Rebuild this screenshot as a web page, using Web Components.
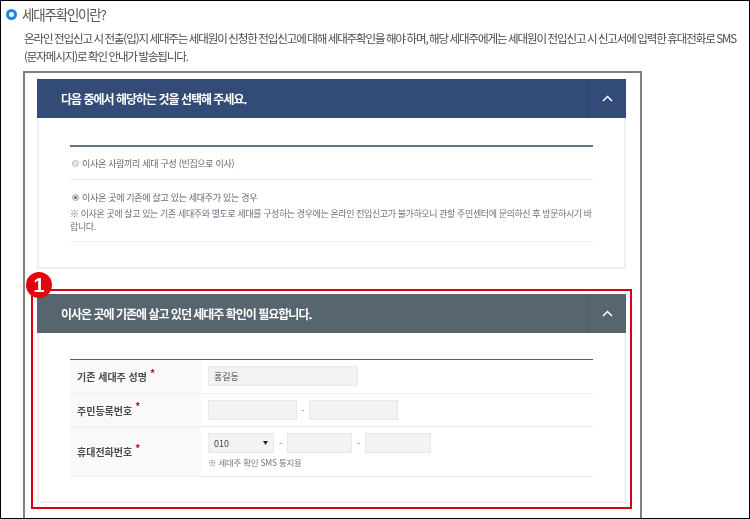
<!DOCTYPE html>
<html lang="ko">
<head>
<meta charset="utf-8">
<title>세대주확인</title>
<style>
  html, body { margin: 0; padding: 0; background: #fff; }
  body { width: 750px; height: 519px; overflow: hidden; font-family: "Noto Sans CJK KR", "Noto Sans", sans-serif; }
</style>
</head>
<body>
<guide-page>
  <guide-title>세대주확인이란?</guide-title>
  <guide-text>온라인 전입신고 시 전출(입)지 세대주는 세대원이 신청한 전입신고에 대해 세대주확인을 해야 하며, 해당 세대주에게는 세대원이 전입신고 시 신고서에 입력한 휴대전화로 SMS<br>(문자메시지)로 확인 안내가 발송됩니다.</guide-text>
  <shot-frame>
    <fold-panel heading="다음 중에서 해당하는 것을 선택해 주세요." tone="#334b77">
      <choice-list></choice-list>
    </fold-panel>
    <mark-box number="1">
      <fold-panel heading="이사온 곳에 기존에 살고 있던 세대주 확인이 필요합니다." tone="#57656e">
        <owner-form></owner-form>
      </fold-panel>
    </mark-box>
  </shot-frame>
</guide-page>

<script>
class GuidePage extends HTMLElement {
  constructor () {
    super()
    this.attachShadow({ mode: 'open' }).innerHTML = /* html */`
      <style>
        :host {
          display: block;
          box-sizing: border-box;
          width: 750px;
          height: 519px;
          overflow: hidden;
          border: 1px solid #000;
          background: #fff;
          color: #444;
          font-family: "Noto Sans CJK KR", "Noto Sans", sans-serif;
          filter: blur(.3px);
        }
      </style>
      <slot></slot>`
  }
}

class GuideTitle extends HTMLElement {
  constructor () {
    super()
    this.attachShadow({ mode: 'open' }).innerHTML = /* html */`
      <style>
        :host {
          display: flex;
          align-items: center;
          gap: 5px;
          height: 26px;
          padding-left: 5px;
          font-size: 13.5px;
          letter-spacing: -1.2px;
          color: #555;
        }
        i {
          box-sizing: border-box;
          width: 11px;
          height: 11px;
          border: 3px solid #1c86e8;
          border-radius: 50%;
          background: #fff;
        }
      </style>
      <i></i><slot></slot>`
  }
}

class GuideText extends HTMLElement {
  constructor () {
    super()
    this.attachShadow({ mode: 'open' }).innerHTML = /* html */`
      <style>
        :host {
          display: block;
          padding: 2px 0 0 23px;
          font-size: 11.5px;
          line-height: 18px;
          letter-spacing: -1.1px;
          word-spacing: -0.6px;
          white-space: nowrap;
          color: #4a4a4a;
        }
      </style>
      <slot></slot>`
  }
}

class ShotFrame extends HTMLElement {
  constructor () {
    super()
    this.attachShadow({ mode: 'open' }).innerHTML = /* html */`
      <style>
        :host {
          display: block;
          box-sizing: border-box;
          width: 619px;
          height: 450px;
          margin: 6px 0 0 22px;
          padding: 6px 0 0 12px;
          border: solid #808080;
          border-width: 2px 2px 0 2px;
          background: #fff;
        }
      </style>
      <slot></slot>`
  }
}

class FoldPanel extends HTMLElement {
  constructor () {
    super()
    const heading = this.getAttribute('heading')
    const tone = this.getAttribute('tone')
    this.attachShadow({ mode: 'open' }).innerHTML = /* html */`
      <style>
        :host {
          display: block;
          box-sizing: border-box;
          width: 589px;
          background: #fff;
          border: solid #f0f0f0;
          border-width: 0 2px 2px;
        }
        header {
          display: flex;
          align-items: center;
          height: 39px;
          margin: 0 -2px;
          padding-left: 24px;
          background: ${tone};
          color: #fff;
          font-size: 12px;
          font-weight: 700;
          letter-spacing: -1px;
        }
        span { flex: 1; }
        button {
          display: flex;
          align-items: center;
          justify-content: center;
          width: 39px;
          height: 39px;
          padding: 0;
          border: 0;
          border-left: 1px solid rgba(0, 0, 0, .1);
          background: none;
        }
        section { padding: 0 31px; }
      </style>
      <header>
        <span>${heading}</span>
        <button aria-label="접기">
          <svg width="11" height="7" viewBox="0 0 11 7" fill="none" stroke="#fff" stroke-width="1.5"><path d="M1 6 5.5 1.5 10 6"/></svg>
        </button>
      </header>
      <section><slot></slot></section>`
  }
}

class ChoiceList extends HTMLElement {
  constructor () {
    super()
    this.attachShadow({ mode: 'open' }).innerHTML = /* html */`
      <style>
        :host {
          display: block;
          box-sizing: border-box;
          height: 149px;
          padding-top: 27px;
          font-size: 9px;
          color: #666;
          letter-spacing: -0.3px;
        }
        .rule { height: 2px; background: #67778a; }
        .row { border-bottom: 1px solid #eee; white-space: nowrap; }
        .one { display: flex; align-items: center; height: 32px; }
        .two { padding-top: 10px; height: 51px; }
        .line { display: flex; align-items: center; height: 15px; }
        .note { line-height: 13px; color: #6a7080; margin-top: 2px; letter-spacing: -0.4px; }
        b {
          box-sizing: border-box;
          flex: none;
          width: 7px;
          height: 7px;
          margin: 0 3px 0 2px;
          border: 1px solid #bbb;
          border-radius: 50%;
          background: #e4e4e4;
        }
        b.on { background: #666; box-shadow: inset 0 0 0 1px #fff; }
      </style>
      <div class="rule"></div>
      <div class="row one"><b></b>이사온 사람끼리 세대 구성 (빈집으로 이사)</div>
      <div class="row two">
        <div class="line"><b class="on"></b>이사온 곳에 기존에 살고 있는 세대주가 있는 경우</div>
        <div class="note">※ 이사온 곳에 살고 있는 기존 세대주와 별도로 세대를 구성하는 경우에는 온라인 전입신고가 불가하오니 관할 주민센터에 문의하신 후 방문하시기 바<br>랍니다.</div>
      </div>`
  }
}

class MarkBox extends HTMLElement {
  constructor () {
    super()
    const number = this.getAttribute('number')
    this.attachShadow({ mode: 'open' }).innerHTML = /* html */`
      <style>
        :host {
          display: block;
          position: relative;
          box-sizing: border-box;
          width: 601px;
          height: 220px;
          margin: 20px 0 0 -6px;
          padding: 3px 4px 3px 4px;
          border: 2px solid #d8000f;
        }
        span {
          position: absolute;
          left: -7px;
          top: -19px;
          width: 26px;
          height: 26px;
          border-radius: 50%;
          background: #e3000f;
          color: #fff;
          font: 700 20px/26px "Liberation Sans", sans-serif;
          text-align: center;
        }
      </style>
      <slot></slot>
      <span>${number}</span>`
  }
}

class FormRow extends HTMLElement {
  constructor () {
    super()
    const label = this.getAttribute('label')
    this.attachShadow({ mode: 'open' }).innerHTML = /* html */`
      <style>
        :host {
          display: grid;
          box-sizing: border-box;
          grid-template-columns: 131px 1fr;
          border-bottom: 1px solid #eee;
        }
        .label {
          display: flex;
          align-items: center;
          padding-left: 7px;
          background: #f9f9f9;
          font-size: 10px;
          font-weight: 700;
          color: #4a4a4a;
          letter-spacing: 0;
        }
        .label sup { color: #d8000f; font-size: 10px; font-weight: 700; line-height: 0; margin: -8px 0 0 3px; }
        .field { padding: 6px 0 0 7px; }
      </style>
      <div class="label">${label}<sup>*</sup></div>
      <div class="field"><slot></slot></div>`
  }
}

class BoxField extends HTMLElement {
  constructor () {
    super()
    const arrow = this.hasAttribute('arrow')
    this.attachShadow({ mode: 'open' }).innerHTML = /* html */`
      <style>
        :host {
          display: flex;
          align-items: center;
          box-sizing: border-box;
          width: var(--w, 90px);
          height: 20px;
          padding: 0 5px;
          border: 1px solid #e8e8e8;
          background: #f3f3f3;
          font-size: 9px;
          color: #444;
          flex: none;
        }
        span { flex: 1; }
        svg { display: ${arrow ? 'block' : 'none'}; }
      </style>
      <span><slot></slot></span>
      <svg width="5" height="4" viewBox="0 0 5 4"><path d="M0 0h5L2.500 4z" fill="#222"/></svg>`
  }
}

class OwnerForm extends HTMLElement {
  constructor () {
    super()
    this.attachShadow({ mode: 'open' }).innerHTML = /* html */`
      <style>
        :host {
          display: block;
          padding-top: 26px;
          height: 168px;
          box-sizing: border-box;
        }
        .rule { height: 1px; background: #4f5f85; }
        .inputs { display: flex; align-items: center; gap: 0; font-size: 9px; color: #666; }
        .inputs em { font-style: normal; text-align: center; flex: none; }
        small { display: block; margin-top: 3px; font-size: 8.5px; color: #777; letter-spacing: -0.25px; }
      </style>
      <div class="rule"></div>
      <form-row label="기존 세대주 성명" style="height:34px">
        <div class="inputs"><box-field style="--w:150px">홍길동</box-field></div>
      </form-row>
      <form-row label="주민등록번호" style="height:33px">
        <div class="inputs">
          <box-field style="--w:89px"></box-field><em style="width:12px">-</em><box-field style="--w:89px"></box-field>
        </div>
      </form-row>
      <form-row label="휴대전화번호" style="height:50px">
        <div class="inputs">
          <box-field arrow style="--w:66px">010</box-field><em style="width:13px">-</em><box-field style="--w:65px"></box-field><em style="width:13px">-</em><box-field style="--w:66px"></box-field>
        </div>
        <small>※ 세대주 확인 SMS 통지용</small>
      </form-row>`
  }
}

customElements.define('guide-page', GuidePage)
customElements.define('guide-title', GuideTitle)
customElements.define('guide-text', GuideText)
customElements.define('shot-frame', ShotFrame)
customElements.define('fold-panel', FoldPanel)
customElements.define('choice-list', ChoiceList)
customElements.define('mark-box', MarkBox)
customElements.define('form-row', FormRow)
customElements.define('box-field', BoxField)
customElements.define('owner-form', OwnerForm)
</script>
</body>
</html>
